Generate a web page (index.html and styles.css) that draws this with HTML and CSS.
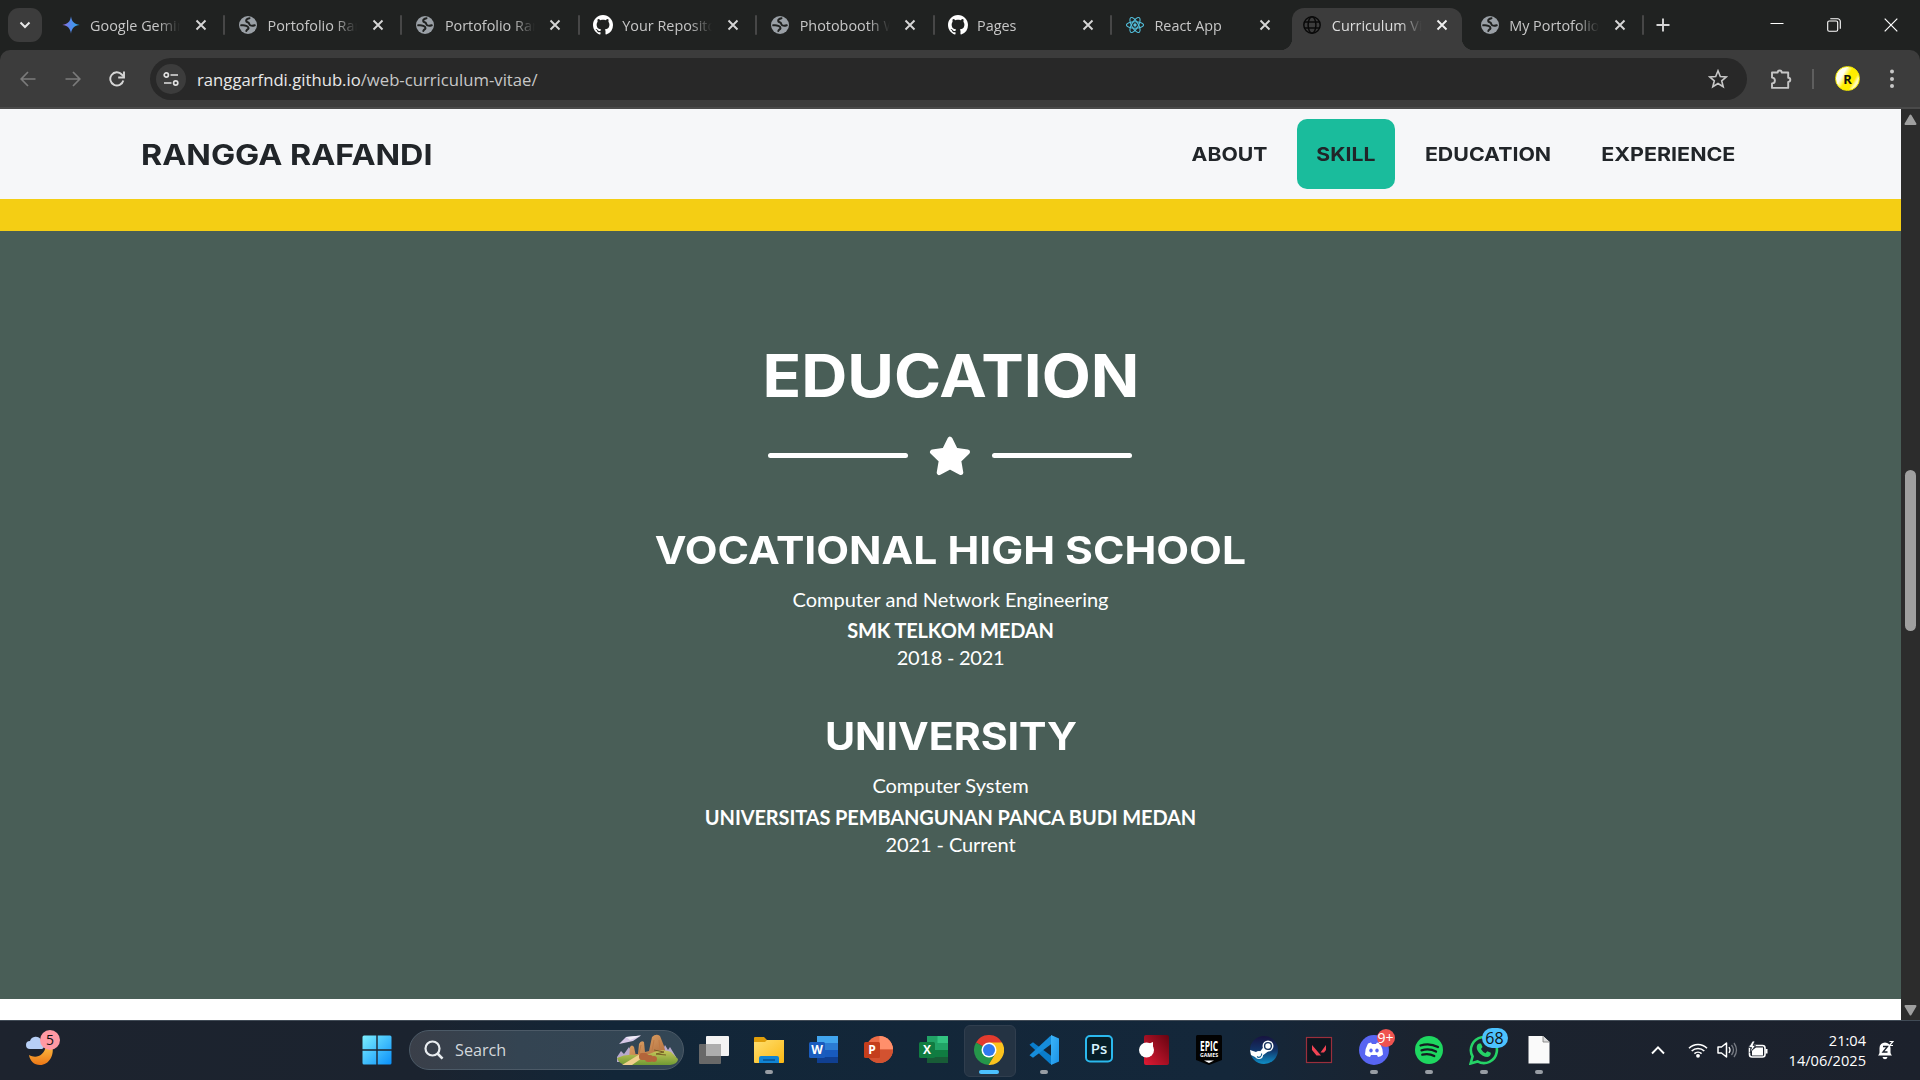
FILE: index.html
```
<!DOCTYPE html>
<html lang="en">
<head>
<meta charset="utf-8">
<title>Curriculum Vitae</title>
<link rel="stylesheet" href="styles.css">
</head>
<body>
<svg class="defs" aria-hidden="true">
  <defs>
    <linearGradient id="gem" x1="0" y1="0" x2="1" y2="0"><stop offset="0" stop-color="#a06ad8"/><stop offset=".4" stop-color="#5b86ee"/><stop offset="1" stop-color="#28a8e8"/></linearGradient>
    <linearGradient id="win" x1="0" y1="0" x2="1" y2="1"><stop offset="0" stop-color="#7cefff"/><stop offset="1" stop-color="#0a90fa"/></linearGradient>
    <linearGradient id="moon" x1="0" y1="0" x2="0" y2="1"><stop offset="0" stop-color="#ffc044"/><stop offset="1" stop-color="#ec7716"/></linearGradient>
    <linearGradient id="fold" x1="0" y1="0" x2="1" y2="1"><stop offset="0" stop-color="#ffdf70"/><stop offset="1" stop-color="#fcb813"/></linearGradient>
    <linearGradient id="red" x1="1" y1="0" x2="0" y2="1"><stop offset="0" stop-color="#650411"/><stop offset="1" stop-color="#e01a34"/></linearGradient>
    <linearGradient id="steam" x1="0" y1="0" x2="0" y2="1"><stop offset="0" stop-color="#17133f"/><stop offset=".5" stop-color="#123468"/><stop offset="1" stop-color="#0f8fc8"/></linearGradient>
    <linearGradient id="rock" x1="0" y1="0" x2="1" y2="1"><stop offset="0" stop-color="#e9ae6c"/><stop offset="1" stop-color="#a8653a"/></linearGradient>
    <linearGradient id="hill" x1="0" y1="0" x2="0" y2="1"><stop offset="0" stop-color="#c9c75a"/><stop offset="1" stop-color="#6f9a34"/></linearGradient>
    <linearGradient id="vs" x1="0" y1="0" x2="1" y2="1"><stop offset="0" stop-color="#3cb4f8"/><stop offset="1" stop-color="#1a93e8"/></linearGradient>
  </defs>
  <symbol id="globe" viewBox="0 0 18 18"><circle cx="9" cy="9" r="9" fill="#9aa0a6"/><path d="M10.500 2.200C8.300 2.600 7 3.600 7.200 5c.2 1.300 2 1 2.600 1.900.8 1.300.2 1.900 1.700 2.500 1.400.5 2.700.3 4.300-.2M2.200 9.300c1.800-.3 3.600-.2 5 .5 1.600.8 2.600 1.200 2.300 2.500-.3 1.200-1.700 1-2.200 2.700" fill="none" stroke="#202221" stroke-width="2" stroke-linecap="round" stroke-linejoin="round"/></symbol>
  <symbol id="wire" viewBox="0 0 18 18"><g fill="none" stroke="#0a0a0a" stroke-width="1.500"><circle cx="9" cy="9" r="8.200"/><ellipse cx="9" cy="9" rx="3.900" ry="8.200"/><path d="M1.500 6h15M1.500 12h15"/></g></symbol>
  <symbol id="github" viewBox="0 0 16 16"><path fill="#fff" d="M8 0C3.580 0 0 3.580 0 8c0 3.540 2.290 6.530 5.470 7.590.4.070.55-.17.55-.38 0-.19-.01-.82-.01-1.490-2.010.37-2.530-.49-2.690-.94-.09-.23-.48-.94-.82-1.130-.28-.15-.68-.52-.01-.53.63-.01 1.080.58 1.230.82.72 1.210 1.870.87 2.330.66.07-.52.28-.87.51-1.070-1.780-.2-3.640-.89-3.640-3.950 0-.87.31-1.590.82-2.150-.08-.2-.36-1.020.08-2.120 0 0 .67-.21 2.200.82.64-.18 1.320-.27 2-.27s1.360.09 2 .27c1.530-1.040 2.200-.82 2.200-.82.44 1.100.16 1.920.08 2.120.51.56.82 1.270.82 2.150 0 3.070-1.870 3.750-3.650 3.950.29.25.54.73.54 1.480 0 1.070-.01 1.930-.01 2.200 0 .21.15.46.55.38A8.010 8.010 0 0 0 16 8c0-4.420-3.580-8-8-8z"/></symbol>
  <symbol id="x" viewBox="0 0 12 12"><path d="M1.500 1.500l9 9M10.500 1.500l-9 9" fill="none" stroke="currentColor" stroke-width="1.900"/></symbol>
</svg>

<header class="tabstrip">
  <button class="tabsearch"><svg width="12" height="8" viewBox="0 0 12 8"><path d="M1.500 1.500L6 6l4.500-4.500" fill="none" stroke="#e8e8e8" stroke-width="2"/></svg></button>
  <nav class="tabs">
    <div class="tab"><svg class="fav" viewBox="0 0 18 18"><path fill="url(#gem)" d="M9 .3C9.600 5.600 12.400 8.400 17.700 9 12.400 9.600 9.600 12.400 9 17.700 8.400 12.400 5.600 9.600.3 9 5.600 8.400 8.400 5.600 9 .3z"/></svg><span class="label">Google Gemini</span><svg class="close"><use href="#x"/></svg></div>
    <div class="tab"><svg class="fav"><use href="#globe"/></svg><span class="label">Portofolio Rangga</span><svg class="close"><use href="#x"/></svg></div>
    <div class="tab"><svg class="fav"><use href="#globe"/></svg><span class="label">Portofolio Rangga</span><svg class="close"><use href="#x"/></svg></div>
    <div class="tab"><svg class="fav big"><use href="#github"/></svg><span class="label">Your Repositories</span><svg class="close"><use href="#x"/></svg></div>
    <div class="tab"><svg class="fav"><use href="#globe"/></svg><span class="label">Photobooth Web</span><svg class="close"><use href="#x"/></svg></div>
    <div class="tab"><svg class="fav big"><use href="#github"/></svg><span class="label">Pages</span><svg class="close"><use href="#x"/></svg></div>
    <div class="tab plain"><svg class="fav" viewBox="0 0 18 18"><g fill="none" stroke="#53c1de" stroke-width="1.100"><ellipse cx="9" cy="9" rx="8.500" ry="3.300"/><ellipse cx="9" cy="9" rx="8.500" ry="3.300" transform="rotate(60 9 9)"/><ellipse cx="9" cy="9" rx="8.500" ry="3.300" transform="rotate(120 9 9)"/></g><circle cx="9" cy="9" r="1.700" fill="#53c1de"/></svg><span class="label">React App</span><svg class="close"><use href="#x"/></svg></div>
    <div class="tab plain active"><svg class="fav"><use href="#wire"/></svg><span class="label">Curriculum Vitae</span><svg class="close"><use href="#x"/></svg></div>
    <div class="tab"><svg class="fav"><use href="#globe"/></svg><span class="label">My Portofolio</span><svg class="close"><use href="#x"/></svg></div>
  </nav>
  <svg class="newtab" width="14" height="14" viewBox="0 0 14 14"><path d="M7 .5v13M.5 7h13" stroke="#d6d6d6" stroke-width="1.900"/></svg>
  <div class="window">
    <svg width="14" height="14" viewBox="0 0 14 14"><path d="M.5 5.500h13" stroke="#fff"/></svg>
    <svg width="14" height="14" viewBox="0 0 14 14"><g fill="none" stroke="#fff" stroke-width="1.100"><rect x=".7" y="3" width="10" height="10.300" rx="1.500"/><path d="M3.300.8h7.400a2.600 2.600 0 0 1 2.600 2.600v7.400"/></g></svg>
    <svg width="14" height="14" viewBox="0 0 14 14"><path d="M.7.7l12.600 12.600M13.300.7L.7 13.300" stroke="#fff" stroke-width="1.200"/></svg>
  </div>
</header>

<div class="toolbar">
  <div class="history">
    <svg width="16" height="16" viewBox="0 0 16 16"><path d="M15.500 8H1.500M8 1L1.200 8 8 15" fill="none" stroke="#7b7b7b" stroke-width="1.700"/></svg>
    <svg width="16" height="16" viewBox="0 0 16 16"><path d="M.5 8h14M8 1l6.800 7L8 15" fill="none" stroke="#7b7b7b" stroke-width="1.700"/></svg>
    <svg width="16" height="16" viewBox="0 0 16 16"><path d="M14.300 9.500A6.600 6.600 0 1 1 12.800 3.500L14.500 5.300" fill="none" stroke="#d6d6d6" stroke-width="1.900"/><path d="M15 .5v6H9.200" fill="none" stroke="#d6d6d6" stroke-width="1.900"/></svg>
  </div>
  <div class="omnibox">
    <span class="site"><svg width="16" height="16" viewBox="0 0 16 16"><g fill="none" stroke="#e0e0e0" stroke-width="1.700"><circle cx="3.300" cy="4" r="2.100"/><path d="M7.500 4H15M1 12h7.500"/><circle cx="12.700" cy="12" r="2.100"/></g></svg></span>
    <span class="url">ranggarfndi.github.io<span>/web-curriculum-vitae/</span></span>
    <svg class="bookmark" width="20" height="20" viewBox="0 0 20 20"><path d="M10 1.800l2.300 5.700 6 .4-4.600 3.900 1.500 5.900L10 14.500l-5.200 3.200 1.500-5.900-4.600-3.900 6-.4z" fill="none" stroke="#c7c7c7" stroke-width="1.600"/></svg>
  </div>
  <svg class="ext" width="22" height="22" viewBox="0 0 22 22"><path d="M2 4.500h5.700a2 2 0 0 1 4 0h6.500v5.200a2.100 2.100 0 0 1 0 4.200v6H2v-4.500a2.600 2.600 0 0 0 0-5.800z" fill="none" stroke="#c7c7c7" stroke-width="1.900" stroke-linejoin="round"/></svg>
  <i class="bar"></i>
  <span class="avatar">R</span>
  <svg class="dots" width="4" height="22" viewBox="0 0 4 22"><g fill="#c7c7c7"><circle cx="2" cy="3.500" r="2"/><circle cx="2" cy="11" r="2"/><circle cx="2" cy="18" r="2"/></g></svg>
</div>

<div class="viewport">
  <main class="page">
    <nav class="sitenav">
      <a class="brand"><span>RANGGA RAFANDI</span></a>
      <div class="links">
        <a class="about"><span>ABOUT</span></a>
        <a class="skill"><span>SKILL</span></a>
        <a class="edu"><span>EDUCATION</span></a>
        <a class="exp"><span>EXPERIENCE</span></a>
      </div>
    </nav>
    <div class="yellow"></div>
    <section class="education">
      <h2>EDUCATION</h2>
      <div class="divider"><i></i><svg width="42" height="42" viewBox="0 0 42 42"><path d="M21 3.200l5.400 11 12.100 1.700-8.800 8.500 2.100 12.200L21 30.900l-10.800 5.700 2.100-12.200-8.800-8.500 12.100-1.700z" fill="#fff" stroke="#fff" stroke-width="5" stroke-linejoin="round"/></svg><i></i></div>
      <h3 class="voc">VOCATIONAL HIGH SCHOOL</h3>
      <p>Computer and Network Engineering</p>
      <p class="school smk">SMK TELKOM MEDAN</p>
      <p class="years">2018 - 2021</p>
      <h3 class="uni">UNIVERSITY</h3>
      <p>Computer System</p>
      <p class="school panca">UNIVERSITAS PEMBANGUNAN PANCA BUDI MEDAN</p>
      <p class="years current-years">2021 - Current</p>
    </section>
    <div class="next"></div>
  </main>
  <aside class="scroll">
    <svg width="13" height="11" viewBox="0 0 13 11"><path d="M6.500 1.500L11.500 10h-10z" fill="#9f9f9f" stroke="#9f9f9f" stroke-width="2" stroke-linejoin="round"/></svg>
    <i class="thumb"></i>
    <svg width="13" height="11" viewBox="0 0 13 11"><path d="M6.500 9.500L11.500 1h-10z" fill="#9f9f9f" stroke="#9f9f9f" stroke-width="2" stroke-linejoin="round"/></svg>
  </aside>
</div>

<footer class="taskbar">
  <div class="weather">
    <svg width="34" height="36" viewBox="0 0 34 36"><path d="M27 13c3 10-3 20-12 20C9 33 5 29 4 23c7 4 15 1 17-9z" fill="url(#moon)"/><path d="M5 17a4 4 0 0 1 0-8 6 6 0 0 1 11-1 5 5 0 0 1 1 9z" fill="#b7cff6"/></svg>
    <b class="badge pink">5</b>
  </div>
  <div class="start"><svg width="30" height="30" viewBox="0 0 30 30"><path d="M.5 2q0-1.500 1.500-1.500h12.300v13.800H.5zM15.700.5H28q1.500 0 1.500 1.500v12.300H15.700zM.5 15.700h13.800v13.800H2q-1.500 0-1.500-1.500zM15.700 15.700h13.800V28q0 1.500-1.500 1.500H15.700z" fill="url(#win)"/></svg></div>
  <div class="search">
    <svg width="20" height="20" viewBox="0 0 20 20"><circle cx="8.500" cy="8.500" r="7" fill="none" stroke="#e9edf0" stroke-width="2.200"/><path d="M13.500 13.500l5 5.200" stroke="#e9edf0" stroke-width="2.600"/></svg>
    <span>Search</span>
    <svg class="scene" width="62" height="32" viewBox="0 0 62 32"><path d="M1 23l4-6 3 3 5-7 5 9h26l5-11 3 5 2-3 6 10v5H1z" fill="#b9a9cd"/><path d="M3 10L10 3l15-1.500L17 7z" fill="#d6c8e8"/><path d="M10 3l15-1.500L14 6z" fill="#f1edf7"/><path d="M13 25l1-12q2-3 4 0l1.500 7L22 20l1-10q2-4 5-2l1 10 4-1 3-14q4-4 8-1l4 10 3 12z" fill="url(#rock)"/><path d="M23 20l2-9M36 17l2-11M44 17l-1-11" stroke="#bf7a45" fill="none"/><path d="M1 24q12-6 27-1 16-10 27-5l7 7q0 5-8 6H10Q3 30 1 24z" fill="url(#hill)"/><path d="M6 31l18-11 5 2-13 9z" fill="#f0cf8c"/><path d="M38 16l10 2-8 2 10 1" fill="none" stroke="#765e25"/><g fill="#b3653a"><rect x="23" y="19" width="9" height="7" rx="3"/><rect x="29" y="21" width="8" height="7" rx="3"/><rect x="35" y="22" width="6" height="6" rx="3"/></g></svg>
  </div>
  <div class="apps">
    <div class="app"><svg viewBox="0 0 30 30"><rect x="7" y="1" width="23" height="20" rx="1" fill="#f3f3f3"/><rect x="0" y="9" width="22" height="20" rx="1" fill="#686868"/><path d="M7 9h15v12H7z" fill="#adadad"/></svg></div>
    <div class="app run"><svg viewBox="0 0 30 30"><path d="M0 3q0-1 1-1h9l3 3v5H0z" fill="#e09e0a"/><path d="M0 7h11l2-2h17v22q0 1-1 1H1q-1 0-1-1z" fill="url(#fold)"/><path d="M5 28v-5q0-2 2-2h16q2 0 2 2v5z" fill="#1084d4"/><path d="M9 25h12" stroke="#08518f" stroke-width="1.500"/></svg></div>
    <div class="app"><svg viewBox="0 0 30 30"><path d="M8 1h21v7H8z" fill="#41a5ee"/><path d="M8 8h21v7H8z" fill="#2b7cd3"/><path d="M8 15h21v7H8z" fill="#185abd"/><path d="M8 22h21v6H8z" fill="#103f91"/><rect x="0" y="7" width="16" height="16" rx="1.500" fill="#1a5cbe"/><text x="8" y="19" class="ico">W</text></svg></div>
    <div class="app"><svg viewBox="0 0 30 30"><circle cx="15.500" cy="14.500" r="13.500" fill="#ed6c47"/><path d="M15.500 1A13.500 13.500 0 0 1 29 14.500H15.500z" fill="#ff8f6b"/><path d="M2 14.500h27a13.500 13.500 0 0 1-27 0z" fill="#d35230"/><rect x="0" y="7" width="16" height="16" rx="1.500" fill="#c43e1c"/><text x="8" y="19" class="ico">P</text></svg></div>
    <div class="app"><svg viewBox="0 0 30 30"><path d="M8 1h21v27H8z" fill="#21a366"/><path d="M18.500 1H29v7H18.500z" fill="#33c481"/><path d="M8 15h21v7H8z" fill="#107c41"/><path d="M18.500 8H29v7H18.500z" fill="#21a366"/><path d="M8 22h21v6H8z" fill="#185c37"/><rect x="0" y="7" width="16" height="16" rx="1.500" fill="#107c41"/><text x="8" y="19" class="ico">X</text></svg></div>
    <div class="app run current"><svg viewBox="0 0 30 30"><path d="M15 15L2 7.500a15 15 0 0 1 26 0z" fill="#e33b2e"/><path d="M15 15L2 7.500A15 15 0 0 0 14.500 30L21 19z" fill="#25964a"/><path d="M15 7.500h13A15 15 0 0 1 14.500 30l7-11.500z" fill="#fcc31e"/><circle cx="15" cy="15" r="7.500" fill="#fff"/><circle cx="15" cy="15" r="6" fill="#3079ef"/></svg></div>
    <div class="app run"><svg viewBox="0 0 30 30"><path d="M.5 9.800L4 7.300 23 21.500V29.500l-2-.7z" fill="#0a7dcb"/><path d="M.5 20.200L4 22.700 23 8.500V.5l-2 .7z" fill="#168ddb"/><path d="M22 0l8 3.500v23L22 30z" fill="url(#vs)"/></svg></div>
    <div class="app"><svg viewBox="0 0 30 30"><rect x="2" y="1" width="26" height="25.500" rx="4" fill="#061e27" stroke="#2bb9ee" stroke-width="2"/><text x="15" y="19" class="ico ps">Ps</text></svg></div>
    <div class="app"><svg viewBox="0 0 30 30"><rect x="5" y="0" width="25" height="30" rx="2" fill="url(#red)"/><circle cx="7.500" cy="15" r="7.500" fill="#fff"/><path d="M9 9l5-2v7z" fill="#fff"/></svg></div>
    <div class="app"><svg viewBox="0 0 30 30"><path d="M2 1.500Q2 0 3.500 0h23Q28 0 28 1.500V25l-13 5-13-5z" fill="#020202"/><text x="15" y="15.500" class="ico epic" textLength="18" lengthAdjust="spacingAndGlyphs">EPIC</text><text x="15" y="22" class="ico games" textLength="18" lengthAdjust="spacingAndGlyphs">GAMES</text><path d="M10 25.500h10L15 28z" fill="#fff"/></svg></div>
    <div class="app"><svg viewBox="0 0 30 30"><circle cx="15" cy="15" r="14" fill="url(#steam)"/><path d="M1 15l9 3 6-8 5 5-8 6-5 2-6-3z" fill="#fff"/><circle cx="19" cy="11" r="5.500" fill="#fff"/><circle cx="19" cy="11" r="3.400" fill="none" stroke="#17345f" stroke-width="1.400"/><circle cx="10" cy="20" r="4" fill="#fff"/><path d="M8 21.500a2.800 2.800 0 0 0 4.500-3" fill="none" stroke="#176091" stroke-width="1.200"/></svg></div>
    <div class="app"><svg viewBox="0 0 30 30"><rect x="2.500" y="2.500" width="25" height="25" fill="#0d151e" stroke="#9b2f3c" stroke-width="1.200"/><path d="M8 10v5l4.500 5.500H17zM22 10v5l-2 2.500h-3.500z" fill="#f04454"/></svg></div>
    <div class="app run"><svg viewBox="0 0 30 30"><circle cx="15" cy="15" r="15" fill="#5865f2"/><path d="M9 8.500l3-1 1 1.500h4l1-1.500 3 1q3 5 3 11-2 2-5 2.500l-1-2h-6l-1 2q-3-.5-5-2.500 0-6 3-11z" fill="#fff"/><ellipse cx="12" cy="15.500" rx="1.700" ry="2" fill="#5865f2"/><ellipse cx="18" cy="15.500" rx="1.700" ry="2" fill="#5865f2"/></svg><b class="badge redb">9+</b></div>
    <div class="app run"><svg viewBox="0 0 30 30"><circle cx="15" cy="15" r="14" fill="#1ed760"/><path d="M6.500 10.500q9-3 17.500 1.500M7.500 15.300q8-2.300 14.500 1.300M8.300 19.700q6.500-1.700 12 1.300" fill="none" stroke="#141b21" stroke-width="2.300" stroke-linecap="round"/></svg></div>
    <div class="app run"><svg viewBox="0 0 30 30"><path d="M1.600 28.500l2-7A13 13 0 1 1 8.500 26.400z" fill="none" stroke="#25d366" stroke-width="2.600"/><path d="M10 8.500l2 0 1.500 3.500-1.500 2q1.500 3 4.500 4.200l1.800-2 3.500 1.600q.3 3.500-3.300 4.200-5 0-9-5-3-4-1-7.500z" fill="#25d366"/></svg><b class="badge blue">68</b></div>
    <div class="app run"><svg viewBox="0 0 30 30"><path d="M4.500 1H19l6.500 6v21.500h-21z" fill="#fafafa"/><path d="M19 1v6h6.500" fill="#ddd" stroke="#777" stroke-width=".8"/></svg></div>
  </div>
  <div class="tray">
    <svg width="16" height="10" viewBox="0 0 16 10"><path d="M2 8.500L8 2.300l6 6.200" fill="none" stroke="#fff" stroke-width="1.900"/></svg>
    <svg class="wifi" width="20" height="16" viewBox="0 0 20 16"><g fill="none" stroke="#fff" stroke-width="1.600"><path d="M1 6.300a12.700 12.700 0 0 1 18 0M3.700 9a9 9 0 0 1 12.600 0M6.400 11.700a5.200 5.200 0 0 1 7.200 0"/></g><circle cx="10" cy="13.800" r="1.900" fill="#fff"/></svg>
    <svg class="sound" width="21" height="18" viewBox="0 0 21 18"><path d="M1 6h3.500L9.500 2v14L4.500 12H1z" fill="none" stroke="#fff" stroke-width="1.500" stroke-linejoin="round"/><path d="M12 6q2 3 0 6" fill="none" stroke="#fff" stroke-width="1.300"/><path d="M14.500 4q4 5 0 10M17 2q5 7 0 14" fill="none" stroke="#777b83" stroke-width="1.300"/></svg>
    <svg class="battery" width="21" height="18" viewBox="0 0 21 18"><rect x="1.500" y="4.500" width="15.500" height="11.500" rx="2.500" fill="none" stroke="#fff" stroke-width="1.600"/><path d="M4 14.500v-5l4-3h7v8z" fill="#fff"/><path d="M18.500 8v4.500" stroke="#fff" stroke-width="2"/><path d="M4.500 0L.5 6.500h3L2 12l5.500-7.500H5L7 0z" fill="#fff" stroke="#1b222d" stroke-width=".8"/></svg>
    <div class="clock"><span>21:04</span><span>14/06/2025</span></div>
    <svg class="bell" width="17" height="20" viewBox="0 0 17 20"><path d="M1 15.500q1.500-1.500 1.500-3V8a5.500 5.500 0 0 1 11 0v4.500q0 1.500 1.500 3zM5.500 17h5q-.5 2.300-2.500 2.300T5.500 17z" fill="#fff"/><path d="M6 6.500h4.500L6 12h4.500" fill="none" stroke="#1b222d" stroke-width="1.400"/><path d="M12.500 1.500H16l-3.500 4H16" fill="none" stroke="#fff" stroke-width="1.200"/></svg>
  </div>
</footer>
</body>
</html>
```
FILE: styles.css
```
* { box-sizing: border-box; }
body { margin: 0; width: 1920px; height: 1080px; overflow: hidden; display: flex; flex-direction: column; font-family: "Open Sans", "Noto Sans", sans-serif; background: #202221; }
svg { display: block; flex: none; }
.defs { position: absolute; width: 0; height: 0; }
h2, h3, p { margin: 0; }

/* Tab strip */
.tabstrip { height: 50px; flex: none; display: flex; align-items: center; background: #202221; }
.tabsearch { width: 34px; height: 34px; margin: 0 4.600px 0 8px; padding: 0; border: 0; border-radius: 11px; background: #3c3c3c; display: grid; place-items: center; }
.tabs { display: flex; height: 50px; }
.tab { position: relative; width: 177.400px; display: flex; align-items: center; padding-left: 15px; color: #c7c7c7; }
.fav { width: 18px; height: 18px; }
.fav.big { width: 20px; height: 20px; margin: 0 -1px; }
.label { width: 90px; margin-left: 10.500px; overflow: hidden; white-space: nowrap; font-size: 14.400px; line-height: 22px; padding-top: 1px; -webkit-mask-image: linear-gradient(90deg, #000 75%, transparent); mask-image: linear-gradient(90deg, #000 75%, transparent); }
.close { width: 12px; height: 12px; margin-left: 14.500px; color: #d6d6d6; }
.tab:not(.plain)::after { content: ""; position: absolute; right: -1px; top: 15px; width: 2px; height: 20px; background: #474747; border-radius: 1px; }
.active { z-index: 1; color: #dedede; }
.active .close { color: #f0f0f0; }
.active > * { position: relative; z-index: 2; }
.active::before { content: ""; position: absolute; left: -8px; top: 8px; width: 194px; height: 42px; background: radial-gradient(circle at 0 0, transparent 12px, #3c3c3c 12.500px) 0 100% / 12px 12px no-repeat, radial-gradient(circle at 100% 0, transparent 12px, #3c3c3c 12.500px) 100% 100% / 12px 12px no-repeat; }
.active::after { content: ""; position: absolute; z-index: 1; left: 4px; top: 8px; width: 170px; height: 42px; border-radius: 12px 12px 0 0; background: #3c3c3c; }
.newtab { margin-left: 13px; }
.window { margin-left: auto; margin-right: 22px; display: flex; gap: 43px; }

/* Toolbar */
.toolbar { height: 59px; flex: none; display: flex; align-items: center; background: #3c3c3c; border-bottom: 2px solid #4a4a4a; border-radius: 10px 10px 0 0; }
.history { width: 150px; padding-left: 20px; display: flex; gap: 28.500px; }
.omnibox { width: 1597px; height: 42px; border-radius: 21px; background: #282828; display: flex; align-items: center; padding: 0 19px 0 6px; }
.site { width: 30px; height: 30px; border-radius: 50%; background: #3c3c3c; display: grid; place-items: center; }
.url { margin-left: 11px; padding-top: 1px; font-size: 16.700px; color: #e8e8e8; }
.url span { color: #c7c7c7; }
.bookmark { margin-left: auto; }
.ext { margin-left: 23px; }
.bar { width: 2px; height: 20px; margin-left: 20px; background: #5e5e5e; }
.avatar { width: 25px; height: 25px; margin-left: 21px; border-radius: 50%; border: 1px solid #f3e900; background: linear-gradient(120deg, #fffef0 30%, #ffee00 48% 70%, #fffbb8 80%); display: grid; place-items: center; font: bold 13px "Open Sans", sans-serif; color: #111; }
.dots { margin-left: 30px; }

/* Site */
.viewport { height: 911px; flex: none; display: flex; }
.page { width: 1901px; display: flex; flex-direction: column; background: #fff; }
.sitenav { height: 90px; flex: none; display: flex; justify-content: space-between; align-items: center; padding: 0 146px 0 141px; background: #f6f7f9; font: bold 19.300px Inter, sans-serif; color: #212529; }
.sitenav span, .education h2, .education h3 { display: inline-block; white-space: nowrap; }
.brand { font-size: 29px; }
.brand span { transform: scaleX(1.113); transform-origin: 0 50%; }
.links { display: flex; }
.links a { height: 70px; display: flex; align-items: center; justify-content: center; border-radius: 10px; }
.about { width: 116px; margin-right: 10px; }
.about span { transform: scaleX(1.100); }
.skill { width: 98px; background: #1abc9c; }
.skill span { transform: scaleX(1.100); }
.edu { width: 167px; margin-left: 10px; }
.edu span { transform: scaleX(1.107); }
.exp { width: 173px; margin-left: 10px; }
.exp span { transform: scaleX(1.112); }
.yellow { height: 32px; flex: none; background: #f4ce14; }
.education { height: 768px; flex: none; padding-top: 110px; background: #495e57; color: #fff; display: flex; flex-direction: column; align-items: center; font-family: Lato, sans-serif; }
.education h2 { font: bold 58.500px/70px Inter, sans-serif; transform: scaleX(1.090); }
.education h3 { font: bold 38.500px/48px Inter, sans-serif; }
.divider { display: flex; align-items: flex-start; gap: 21px; height: 42px; margin: 25px 0 48px; padding-right: 1px; }
.divider i { width: 140px; height: 5px; margin-top: 17px; border-radius: 2.500px; background: #fff; }
.education .voc { transform: scaleX(1.106); margin-bottom: 12px; }
.education .uni { transform: scaleX(1.068); margin: 41px 0 12px; }
.education p { font-size: 20px; line-height: 27px; white-space: nowrap; }
.education .school { margin-top: 4px; font-weight: 700; letter-spacing: -.12px; }
.education .smk { letter-spacing: -.15px; }
.education .panca { padding-top: 1px; }
.education .years { letter-spacing: -.25px; }
.education .current-years { letter-spacing: -.1px; }
.scroll { width: 19px; background: #2c2c2c; display: flex; flex-direction: column; align-items: center; padding: 5px 0 4px; }
.thumb { width: 11px; height: 161px; margin: 345px 0 auto; border-radius: 6px; background: #9f9f9f; }

/* Taskbar */
.taskbar { height: 60px; flex: none; display: flex; align-items: center; border-top: 1px solid #414b56; padding-bottom: 1px; background: linear-gradient(90deg, #1d232e 0, #1b232f 22%, #122638 32%, #14273a 64%, #1b232f 74%, #1c212c 100%); color: #fff; }
.weather { position: relative; width: 350px; padding-left: 25px; }
.badge { position: absolute; display: grid; place-items: center; height: 20px; border-radius: 10px; font-size: 14px; font-weight: 400; line-height: 20px; }
.pink { left: 40px; top: -2px; width: 20px; background: #ff99a4; color: #111; }
.start { width: 59px; padding-left: 12px; }
.search { width: 275px; height: 40px; margin-right: 2.500px; border: 1px solid #4c5a67; border-radius: 20px; background: linear-gradient(90deg, #3a3f49, #344452 40%, #334655); display: flex; align-items: center; padding: 0 5px 0 14px; font-size: 16.200px; color: #d3d8dc; }
.search span { margin-left: 11px; }
.scene { margin-left: auto; }
.apps { display: flex; height: 58px; }
.app { position: relative; width: 55px; display: grid; place-items: center; }
.app svg { width: 30px; height: 30px; position: relative; }
.run::after { content: ""; position: absolute; left: 23.500px; bottom: 5px; width: 8px; height: 4px; border-radius: 2px; background: #989da4; }
.current::before { content: ""; position: absolute; left: 2px; top: 4px; width: 50px; height: 50px; border: 1px solid #303e4e; border-radius: 6px; background: #243343; }
.current::after { left: 17.500px; width: 20px; background: #4cc2ff; }
.ico { fill: #fff; font: bold 12px "Open Sans", sans-serif; text-anchor: middle; }
.ps { font-size: 15px; font-weight: 600; fill: #d7f2ff; }
.epic { font-size: 14px; }
.games { font-size: 5px; }
.redb { left: 30px; top: 8px; width: 18px; height: 18px; background: #ef5350; line-height: 18px; }
.blue { left: 25px; top: 7px; width: 26px; background: #4cc2ff; color: #111; font-size: 16px; }
.tray { margin-left: auto; padding-right: 26px; display: flex; align-items: center; }
.wifi { margin-left: 22px; }
.sound { margin-left: 9px; }
.battery { margin-left: 10px; }
.clock { width: 97px; display: flex; flex-direction: column; align-items: flex-end; font-size: 14.600px; line-height: 20px; padding-bottom: 1px; }
.bell { margin-left: 11px; }
```
